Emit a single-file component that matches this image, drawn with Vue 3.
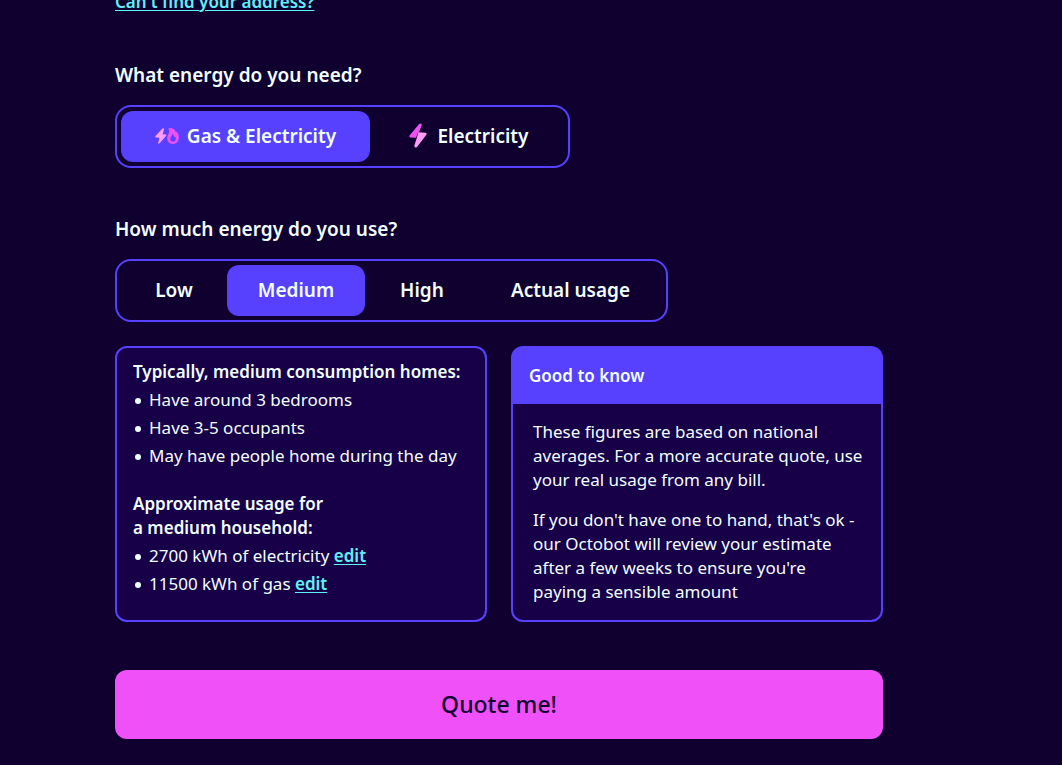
<script setup>
import { ref } from 'vue'

const fuel = ref('dual')
const usage = ref('medium')

const usageOptions = [
  { id: 'low', label: 'Low' },
  { id: 'medium', label: 'Medium' },
  { id: 'high', label: 'High' },
  { id: 'actual', label: 'Actual usage' }
]
</script>

<template>
  <main class="page">
    <form class="form" @submit.prevent>
      <a class="address-link" href="#address">Can't find your address?</a>

      <fieldset class="question">
        <legend>What energy do you need?</legend>
        <div class="segments fuel">
          <label class="segment" :class="{ active: fuel === 'dual' }">
            <input v-model="fuel" type="radio" name="fuel" value="dual" />
            <svg class="icon-dual" viewBox="0 0 24 16" aria-hidden="true">
              <path d="M7.4.6.5 8.1Q0 9.3 1.1 9.5L4.5 9.7 3.2 14.7Q3.2 16.2 4.7 15.3L11.2 7.8Q11.8 6.6 10.6 6.5L7.6 6.3 9 1.4Q9-.4 7.4.6Z" fill="#ff9cf8" />
              <path fill-rule="evenodd" d="M13.4.2C17.1-.3 19.8 1.2 20.8 4.2L21.5 3.4C23.2 5.1 24 7.2 23.8 9.8 23.5 13.7 21.4 16 18 16 14.4 16 12.2 13.7 12.2 10.3 12.2 8 13.3 6.7 13.8 5.2 14.2 3.7 14.1 2 13.4.2ZM17.4 5.6C17.5 7.9 15.4 8.6 15.3 10.9 15.3 12.6 16.4 13.6 18 13.6 19.8 13.6 20.8 12.4 20.8 10.8 20.8 9.9 20.4 9.1 19.8 8.4L19 9.1C18.8 7.6 18.3 6.4 17.4 5.6Z" fill="#f050f8" />
            </svg>
            <span>Gas &amp; Electricity</span>
          </label>
          <label class="segment" :class="{ active: fuel === 'electricity' }">
            <input v-model="fuel" type="radio" name="fuel" value="electricity" />
            <svg class="icon-bolt" viewBox="0 0 18 25" aria-hidden="true">
              <path d="M10.2 1.1.5 12.5Q-.2 14 1.3 14.5L7 14.7 9 9.7 10 9.2 12.7 2.2Q12.8-.4 10.2 1.1Z" fill="#f050f8" />
              <path d="M9.4 9.3 16.5 9.7Q18.4 10.2 17.2 12L8 23.9Q5.4 25.4 5.3 22.7L8 14.2Z" fill="#ff9cf8" />
            </svg>
            <span>Electricity</span>
          </label>
        </div>
      </fieldset>

      <fieldset class="question">
        <legend>How much energy do you use?</legend>
        <div class="segments usage">
          <label
            v-for="option in usageOptions"
            :key="option.id"
            class="segment"
            :class="{ active: usage === option.id }"
          >
            <input v-model="usage" type="radio" name="usage" :value="option.id" />
            <span>{{ option.label }}</span>
          </label>
        </div>
      </fieldset>

      <div class="cards">
        <section class="card details">
          <h2>Typically, medium consumption homes:</h2>
          <ul>
            <li>Have around 3 bedrooms</li>
            <li>Have 3-5 occupants</li>
            <li>May have people home during the day</li>
          </ul>
          <h2>Approximate usage for<br />a medium household:</h2>
          <ul>
            <li>2700 kWh of electricity <a href="#edit-electricity">edit</a></li>
            <li>11500 kWh of gas <a href="#edit-gas">edit</a></li>
          </ul>
        </section>

        <section class="card note">
          <h2>Good to know</h2>
          <div class="note-body">
            <p>These figures are based on national averages. For a more accurate quote, use your real usage from any bill.</p>
            <p>If you don't have one to hand, that's ok - our Octobot will review your estimate after a few weeks to ensure you're paying a sensible amount</p>
          </div>
        </section>
      </div>

      <button class="quote" type="submit">Quote me!</button>
    </form>
  </main>
</template>

<style>
html {
  background: #100030;
}
</style>

<style scoped>
.page {
  padding: 0 115px 24px;
  color: #f0ffff;
  font-family: "Noto Sans", "Open Sans", sans-serif;
  font-size: 17px;
  line-height: 24px;
  display: flow-root;
}
.form {
  max-width: 768px;
  margin-top: -10px;
}
.address-link {
  display: table;
}
a {
  color: #60f0f8;
  font-weight: 600;
  text-underline-offset: 2px;
  text-decoration-thickness: 1px;
}
.question {
  border: 0;
  margin: 49px 0 0;
  padding: 0;
  min-width: 0;
}
legend {
  padding: 0;
  margin-bottom: 18px;
  font-size: 19px;
  font-weight: 600;
}
.segments {
  display: grid;
  box-sizing: border-box;
  border: 2px solid #5840ff;
  border-radius: 16px;
  padding: 4px;
}
.fuel {
  max-width: 455px;
  grid-template-columns: 249fr 194fr;
}
.usage {
  max-width: 553px;
  grid-template-columns: 106fr 138fr 114fr 183fr;
}
.segment {
  position: relative;
  display: flex;
  align-items: center;
  justify-content: center;
  gap: 8px;
  box-sizing: border-box;
  height: 51px;
  padding-bottom: 2px;
  border-radius: 12px;
  font-size: 19px;
  font-weight: 600;
  cursor: pointer;
}
.segment.active {
  background: #5840ff;
}
.segment input {
  position: absolute;
  inset: 0;
  margin: 0;
  appearance: none;
  border-radius: 12px;
  cursor: pointer;
}
.icon-dual {
  width: 24px;
  height: 16px;
}
.icon-bolt {
  width: 18px;
  height: 25px;
  margin: 0 2px 0 4px;
}
.cards {
  display: grid;
  grid-template-columns: 1fr 1fr;
  gap: 24px;
  margin-top: 24px;
}
.card {
  background: #180048;
  border: 2px solid #5840ff;
  border-radius: 12px;
}
.card h2 {
  margin: 0;
  font-size: 17px;
  font-weight: 600;
  line-height: 24px;
}
.details {
  padding: 12px 16px 20px;
}
ul {
  list-style: none;
  margin: 0;
  padding: 0;
}
ul + h2 {
  padding-top: 24px;
}
li {
  display: block;
  margin-top: 4px;
}
li::before {
  content: "";
  display: inline-block;
  width: 6px;
  height: 6px;
  margin: 0 8px 2px 2px;
  border-radius: 50%;
  background: #f0ffff;
}
.note {
  background: linear-gradient(#5840ff 56px, #180048 56px);
}
.note h2 {
  padding: 16px;
}
.note-body {
  padding: 16px 18px 16px 20px;
}
.note p {
  margin: 0;
}
.note p + p {
  margin-top: 16px;
}
.quote {
  display: block;
  width: 100%;
  height: 69px;
  margin-top: 48px;
  padding: 0 0 2px;
  border: 0;
  border-radius: 12px;
  background: #f050f8;
  color: #100030;
  font: inherit;
  font-size: 23px;
  font-weight: 500;
  cursor: pointer;
}
</style>
